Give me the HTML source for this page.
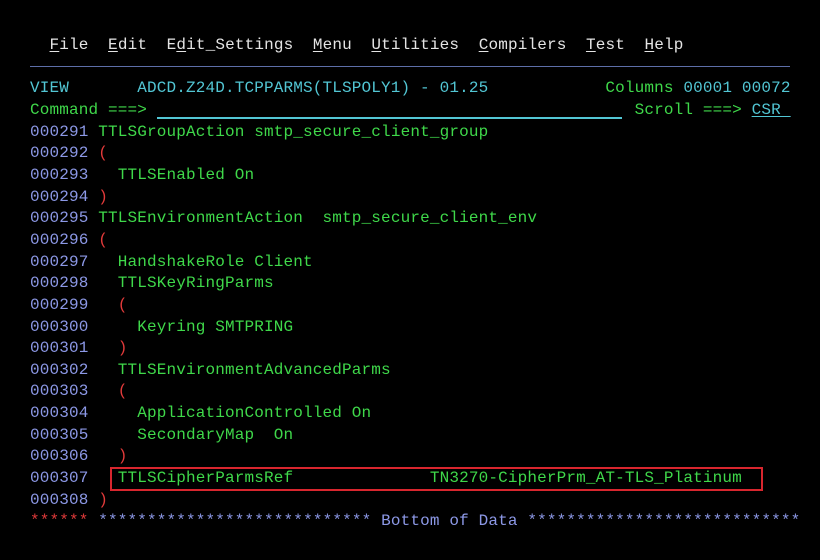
<!DOCTYPE html>
<html><head><meta charset="utf-8"><style>
html,body{margin:0;padding:0;background:#000;width:820px;height:560px;overflow:hidden}
.r{position:absolute;left:30px;height:21.65px;line-height:21.65px;font-family:"Liberation Mono",monospace;font-size:16px;letter-spacing:0.15px;white-space:pre;color:#3fd84a}
.g{color:#3fd84a}.t{color:#52c6d4}.b{color:#8c98e6}.rd{color:#e23a3a}.w{color:#e4e4e4}
u{text-decoration:underline;text-underline-offset:2px}
</style></head><body>
<div class="r w" style="top:35px"><span>  <u>F</u>ile  <u>E</u>dit  E<u>d</u>it_Settings  <u>M</u>enu  <u>U</u>tilities  <u>C</u>ompilers  <u>T</u>est  <u>H</u>elp</span></div>
<div style="position:absolute;left:30px;top:66px;width:760px;height:1px;background:#5d6ea8"></div>
<div class="r" style="top:78.3px"><span class="t">VIEW       ADCD.Z24D.TCPPARMS(TLSPOLY1) - 01.25</span><span>            Columns </span><span class="t">00001 00072</span></div>
<div class="r" style="top:100px"><span>Command ===> </span><span>                                                 </span><span class="g">Scroll ===> </span><span class="t"><u>CSR </u></span></div>
<div style="position:absolute;left:157px;top:117px;width:465px;height:1.5px;background:#52c6d4"></div>
<div class="r" style="top:121.6px"><span class="b">000291</span> TTLSGroupAction smtp_secure_client_group</div>
<div class="r" style="top:143.3px"><span class="b">000292</span> <span class="rd">(</span></div>
<div class="r" style="top:164.9px"><span class="b">000293</span>   TTLSEnabled On</div>
<div class="r" style="top:186.6px"><span class="b">000294</span> <span class="rd">)</span></div>
<div class="r" style="top:208.2px"><span class="b">000295</span> TTLSEnvironmentAction  smtp_secure_client_env</div>
<div class="r" style="top:229.9px"><span class="b">000296</span> <span class="rd">(</span></div>
<div class="r" style="top:251.5px"><span class="b">000297</span>   HandshakeRole Client</div>
<div class="r" style="top:273.2px"><span class="b">000298</span>   TTLSKeyRingParms</div>
<div class="r" style="top:294.8px"><span class="b">000299</span>   <span class="rd">(</span></div>
<div class="r" style="top:316.5px"><span class="b">000300</span>     Keyring SMTPRING</div>
<div class="r" style="top:338.1px"><span class="b">000301</span>   <span class="rd">)</span></div>
<div class="r" style="top:359.8px"><span class="b">000302</span>   TTLSEnvironmentAdvancedParms</div>
<div class="r" style="top:381.4px"><span class="b">000303</span>   <span class="rd">(</span></div>
<div class="r" style="top:403.1px"><span class="b">000304</span>     ApplicationControlled On</div>
<div class="r" style="top:424.7px"><span class="b">000305</span>     SecondaryMap  On</div>
<div class="r" style="top:446.4px"><span class="b">000306</span>   <span class="rd">)</span></div>
<div class="r" style="top:468px"><span class="b">000307</span>   TTLSCipherParmsRef              TN3270-CipherPrm_AT-TLS_Platinum</div>
<div style="position:absolute;left:110px;top:467px;width:649px;height:20px;border:2px solid #d8262e"></div>
<div class="r" style="top:489.7px"><span class="b">000308</span> <span class="rd">)</span></div>
<div class="r" style="top:511.3px"><span class="rd">******</span> <span class="b">**************************** Bottom of Data ****************************</span></div>
</body></html>
